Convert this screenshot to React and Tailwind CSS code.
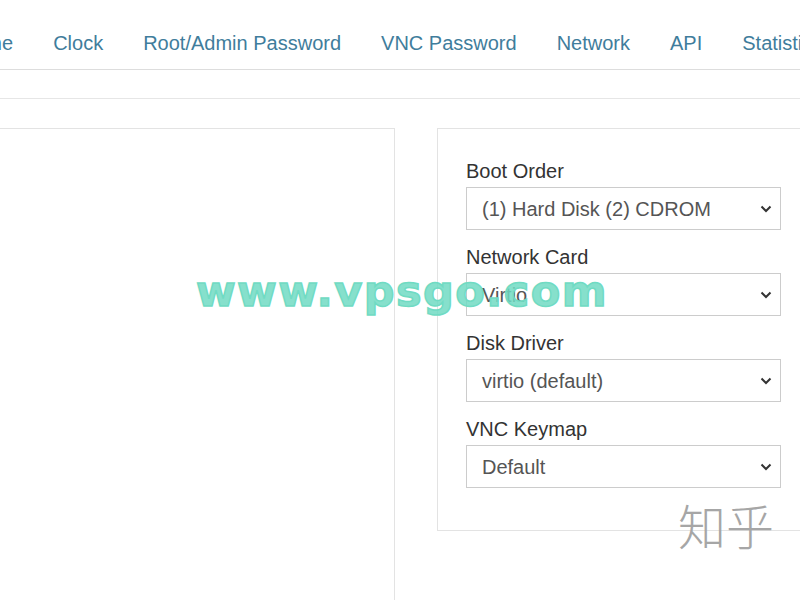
const tabs = ['Hostname', 'Clock', 'Root/Admin Password', 'VNC Password', 'Network', 'API', 'Statistics'];

const fields = [
  { label: 'Boot Order', value: '(1) Hard Disk (2) CDROM' },
  { label: 'Network Card', value: 'Virtio' },
  { label: 'Disk Driver', value: 'virtio (default)' },
  { label: 'VNC Keymap', value: 'Default' },
];

const Chevron = () => (
  <svg width="12" height="8" viewBox="0 0 12 8" className="shrink-0">
    <path d="M1.5 1.5 L6 6 L10.5 1.5" fill="none" stroke="#333" strokeWidth="2" />
  </svg>
);

const App = () => {
  return (
    <div className="relative w-[800px] h-[600px] overflow-hidden bg-white font-['Liberation_Sans',Arial,sans-serif]">
      {/* tabs */}
      <div className="border-b border-[#dddddd] h-[70px]">
        <ul className="flex gap-10 ml-[-78px] pt-[31px] whitespace-nowrap">
          {tabs.map((t) => (
            <li key={t} className="text-[20px] leading-6 text-[#3f7d9c]">{t}</li>
          ))}
        </ul>
      </div>

      <div className="h-[29px] border-b border-[#e6e6e6]"></div>

      {/* panels */}
      <div className="flex gap-[42px] mt-[29px] ml-[-1px]">
        <div className="w-[396px] h-[480px] border-t border-r border-[#e3e3e3]"></div>

        <div className="flex-1 mr-[-40px] h-[403px] border border-[#e3e3e3] pl-[28px] pt-[30px]">
          {fields.map((f) => (
            <div key={f.label} className="mb-[15px]">
              <div className="text-[20px] leading-6 text-[#333]">{f.label}</div>
              <div className="mt-[4px] w-[315px] h-[43px] border border-[#cccccc] flex items-center justify-between pl-[15px] pr-[8px]">
                <span className="text-[20px] text-[#555]">{f.value}</span>
                <Chevron />
              </div>
            </div>
          ))}
        </div>
      </div>

      {/* watermarks */}
      <div className="absolute left-[196px] top-[266px] text-[43px] leading-[50px] font-bold tracking-[1.4px] text-[#70dbc3]/85 [-webkit-text-stroke:1.5px_#70dbc3] font-['DejaVu_Sans',sans-serif]">
        www.vpsgo.com
      </div>
      <div className="absolute left-[678px] top-[494px] text-[48px] leading-[60px] font-light text-[#a6a6a6] font-['Noto_Sans_CJK_SC',sans-serif]">
        知乎
      </div>
    </div>
  );
};

export default App;
